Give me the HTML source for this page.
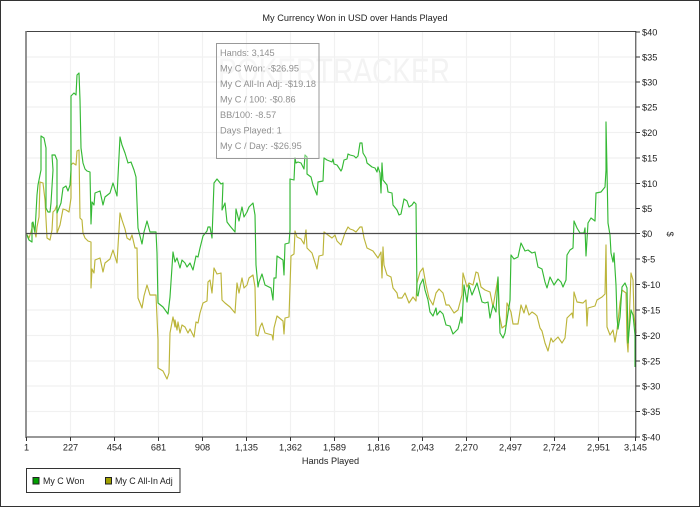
<!DOCTYPE html>
<html><head><meta charset="utf-8"><style>
html,body{margin:0;padding:0;width:700px;height:507px;overflow:hidden;background:#fff}
svg{display:block}
text{font-family:"Liberation Sans",Arial,sans-serif;font-size:9.2px;fill:#222}
.g line{stroke:#f1f1f1;stroke-width:1.2}
.l{fill:none;stroke-width:1.15;stroke-linejoin:round;vector-effect:non-scaling-stroke}
.gr{stroke:#35b935}.ol{stroke:#bcb53a}
.t text{fill:#909090}
</style></head><body>
<svg width="700" height="507" viewBox="0 0 700 507" xmlns="http://www.w3.org/2000/svg">
<rect x="0.5" y="0.5" width="699" height="506" fill="#fff" stroke="#333"/>
<text x="355" y="21" text-anchor="middle">My Currency Won in USD over Hands Played</text>
<g class="g">
<line x1="70.5" x2="70.5" y1="32" y2="437"/><line x1="114.5" x2="114.5" y1="32" y2="437"/><line x1="158.5" x2="158.5" y1="32" y2="437"/><line x1="202.5" x2="202.5" y1="32" y2="437"/><line x1="246.5" x2="246.5" y1="32" y2="437"/><line x1="290.5" x2="290.5" y1="32" y2="437"/><line x1="334.5" x2="334.5" y1="32" y2="437"/><line x1="378.5" x2="378.5" y1="32" y2="437"/><line x1="422.5" x2="422.5" y1="32" y2="437"/><line x1="466.5" x2="466.5" y1="32" y2="437"/><line x1="510.5" x2="510.5" y1="32" y2="437"/><line x1="554.5" x2="554.5" y1="32" y2="437"/><line x1="598.5" x2="598.5" y1="32" y2="437"/>
<line x1="26" x2="636" y1="57" y2="57"/><line x1="26" x2="636" y1="82" y2="82"/><line x1="26" x2="636" y1="107" y2="107"/><line x1="26" x2="636" y1="132.500" y2="132.500"/><line x1="26" x2="636" y1="158" y2="158"/><line x1="26" x2="636" y1="183.500" y2="183.500"/><line x1="26" x2="636" y1="208.500" y2="208.500"/><line x1="26" x2="636" y1="259" y2="259"/><line x1="26" x2="636" y1="284.500" y2="284.500"/><line x1="26" x2="636" y1="310" y2="310"/><line x1="26" x2="636" y1="335.500" y2="335.500"/><line x1="26" x2="636" y1="361" y2="361"/><line x1="26" x2="636" y1="386" y2="386"/><line x1="26" x2="636" y1="411.500" y2="411.500"/>
</g>
<text x="218" y="83" style="font-size:35px;fill:#f3f3f3" textLength="232" lengthAdjust="spacingAndGlyphs">POKERTRACKER</text>
<!-- olive -->
<polyline class="l ol" points="26,233 29,238 31,232 33,224 35,233 36,237 37,227 39,217 40,182 43,183 45,200 47,238 50,240 52,230 53,212 55,210 57,205 57,233 60,225 63,209 66,210 69,212 71,198 71,165 73,163 76,165 77,151 79,150 80,218 82,220 83,233 85,238 88,241 91,242 91,288 92,269 94,273 95,260 100,258 103,272 105,263 110,259 113,250 117,263 120,213 122,220 125,229 127,238 130,240 132,235 135,248 137,248 138,298 142,308 144,296 147,285 150,295 156,295 158,340 158,368 163,371 167,379 169,373 170,333 173,317 175,327 175,320 177,330 178,322 180,333 182,325 185,327 188,333 190,329 194,337 196,322 198,323 200,313 203,303 207,301 208,282 210,280 212,293 214,268 217,274 221,273 222,300 225,303 230,307 235,313 237,283 239,293 242,278 244,288 247,285 249,278 253,275 255,287 256,335 258,336 260,327 262,323 265,333 272,335 273,340 274,328 277,316 283,321 284,334 285,318 289,317 291,256 294,254 295,231 297,237 301,239 304,244 306,230 307,248 312,253 317,269 319,256 323,255 324,232 328,235 332,238 335,235 337,241 341,245 345,233 348,227 350,229 353,230 356,232 360,227 362,227 364,238 367,248 373,251 378,258 381,252 382,278 383,247 384,265 387,275 391,277 393,288 397,293 398,298 402,298 405,293 409,303 413,297 416,301 417,283 420,272 423,268 426,285 429,298 433,305 436,293 439,289 443,293 446,305 449,305 454,313 458,310 462,295 463,273 467,287 469,283 473,285 476,272 478,273 481,287 485,290 490,292 493,307 498,278 499,313 502,328 506,325 507,303 511,312 513,324 518,324 521,305 524,313 526,305 529,315 532,312 535,314 537,316 540,328 542,331 545,343 548,351 551,338 553,342 558,337 562,343 565,338 567,318 572,313 573,318 574,292 577,302 583,303 586,300 587,326 588,308 595,306 597,300 602,297 605,294 606,245 607,327 610,335 613,330 615,342 617,330 620,303 622,290 626,293 627,340 628,352 631,273 633,280 634,315 636,333"/>
<!-- green -->
<polyline class="l gr" points="26,233 29,240 32,242 32,223 33,222 35,232 37,195 38,185 41,170 41,136 44,138 46,148 46,208 48,212 50,212 51,203 53,170 52,155 55,155 57,160 57,213 61,203 63,188 66,186 68,191 70,185 71,170 71,96 74,93 76,95 77,75 79,73 80,100 81,148 83,163 85,169 87,171 90,172 91,224 92,202 94,205 95,193 100,191 103,205 105,197 110,193 113,183 117,196 120,137 122,145 125,153 128,163 131,162 134,170 136,177 138,228 142,244 144,232 147,221 150,232 156,232 157,253 158,303 163,307 168,314 170,297 173,252 175,262 177,258 180,268 182,260 185,263 187,267 190,263 193,270 196,256 198,257 200,248 203,236 207,231 208,227 210,227 212,238 214,183 217,179 221,184 223,183 222,210 225,203 227,222 230,226 235,232 236,209 239,221 242,207 244,217 247,212 249,207 253,203 255,215 256,265 258,287 259,282 262,274 265,285 271,288 273,300 274,278 276,278 277,256 283,260 284,275 285,244 289,243 290,230 290,179 294,180 295,158 296,163 298,162 301,163 304,169 305,155 307,157 307,174 311,177 313,185 317,195 318,182 323,181 324,158 327,160 332,162 333,159 334,164 337,165 341,171 342,169 344,160 347,159 348,154 350,155 354,156 356,158 358,156 360,143 362,143 363,153 366,158 367,163 372,167 375,168 377,172 378,167 380,173 381,193 382,163 383,180 387,185 388,192 392,193 393,205 397,210 399,215 401,214 404,199 407,201 409,207 412,205 414,202 416,204 417,295 418,296 420,285 423,279 425,290 428,300 430,312 433,316 436,308 437,315 440,311 443,314 446,325 450,326 453,334 458,329 461,317 462,323 464,285 467,302 469,285 472,295 477,283 482,302 485,303 488,302 490,318 493,305 496,312 498,277 500,333 503,338 505,333 510,300 511,255 514,259 518,257 521,243 525,251 528,250 532,253 535,252 538,267 542,269 545,282 547,288 550,277 554,285 558,279 561,282 563,287 566,280 567,255 570,250 573,248 574,221 577,228 580,233 584,233 585,228 586,256 588,223 591,218 595,221 596,193 601,192 605,187 606,170 606,122 607,170 608,223 610,235 611,253 613,262 614,253 616,285 617,317 618,329 620,317 622,287 625,283 627,288 628,343 631,310 633,315 635,335 635,367"/>
<!-- axes -->
<line x1="26" x2="636" y1="31.500" y2="31.500" stroke="#444" stroke-width="1"/>
<line x1="26" x2="26" y1="31" y2="438" stroke="#777" stroke-width="1.6"/>
<line x1="26" x2="636" y1="437" y2="437" stroke="#777" stroke-width="1.6"/>
<line x1="635.800" x2="635.800" y1="31" y2="438" stroke="#333" stroke-width="1"/>
<line x1="26" x2="636" y1="233.500" y2="233.500" stroke="#4a4a4a" stroke-width="1.2"/>
<g stroke="#333" stroke-width="1">
<line x1="636" x2="640" y1="32" y2="32"/><line x1="636" x2="640" y1="57" y2="57"/><line x1="636" x2="640" y1="82" y2="82"/><line x1="636" x2="640" y1="107" y2="107"/><line x1="636" x2="640" y1="132.500" y2="132.500"/><line x1="636" x2="640" y1="158" y2="158"/><line x1="636" x2="640" y1="183.500" y2="183.500"/><line x1="636" x2="640" y1="208.500" y2="208.500"/><line x1="636" x2="640" y1="233.500" y2="233.500"/><line x1="636" x2="640" y1="259" y2="259"/><line x1="636" x2="640" y1="284.500" y2="284.500"/><line x1="636" x2="640" y1="310" y2="310"/><line x1="636" x2="640" y1="335.500" y2="335.500"/><line x1="636" x2="640" y1="361" y2="361"/><line x1="636" x2="640" y1="386" y2="386"/><line x1="636" x2="640" y1="411.500" y2="411.500"/><line x1="636" x2="640" y1="437" y2="437"/>
<line x1="26.500" x2="26.500" y1="437" y2="441"/><line x1="70.500" x2="70.500" y1="437" y2="441"/><line x1="114.500" x2="114.500" y1="437" y2="441"/><line x1="158.500" x2="158.500" y1="437" y2="441"/><line x1="202.500" x2="202.500" y1="437" y2="441"/><line x1="246.500" x2="246.500" y1="437" y2="441"/><line x1="290.500" x2="290.500" y1="437" y2="441"/><line x1="334.500" x2="334.500" y1="437" y2="441"/><line x1="378.500" x2="378.500" y1="437" y2="441"/><line x1="422.500" x2="422.500" y1="437" y2="441"/><line x1="466.500" x2="466.500" y1="437" y2="441"/><line x1="510.500" x2="510.500" y1="437" y2="441"/><line x1="554.500" x2="554.500" y1="437" y2="441"/><line x1="598.500" x2="598.500" y1="437" y2="441"/><line x1="635.500" x2="635.500" y1="437" y2="441"/>
</g>
<g>
<text x="642" y="35.500">$40</text><text x="642" y="60.500">$35</text><text x="642" y="85.500">$30</text><text x="642" y="110.500">$25</text><text x="642" y="136">$20</text><text x="642" y="161.500">$15</text><text x="642" y="187">$10</text><text x="642" y="212">$5</text><text x="642" y="237">$0</text><text x="642" y="262.500">$-5</text><text x="642" y="288">$-10</text><text x="642" y="313.500">$-15</text><text x="642" y="339">$-20</text><text x="642" y="364.500">$-25</text><text x="642" y="389.500">$-30</text><text x="642" y="415">$-35</text><text x="642" y="440.500">$-40</text>
</g>
<text transform="translate(667,234) rotate(90)" text-anchor="middle">$</text>
<g text-anchor="middle">
<text x="26.500" y="450.500">1</text><text x="70.500" y="450.500">227</text><text x="114.500" y="450.500">454</text><text x="158.500" y="450.500">681</text><text x="202.500" y="450.500">908</text><text x="246.500" y="450.500">1,135</text><text x="290.500" y="450.500">1,362</text><text x="334.500" y="450.500">1,589</text><text x="378.500" y="450.500">1,816</text><text x="422.500" y="450.500">2,043</text><text x="466.500" y="450.500">2,270</text><text x="510.500" y="450.500">2,497</text><text x="554.500" y="450.500">2,724</text><text x="598.500" y="450.500">2,951</text><text x="635.500" y="450.500">3,145</text>
<text x="330.500" y="464">Hands Played</text>
</g>
<!-- tooltip -->
<rect x="216.500" y="43.500" width="102.500" height="115" fill="#fff" fill-opacity=".3" stroke="#999" stroke-width="1"/>
<g class="t">
<text x="220" y="56">Hands: 3,145</text>
<text x="220" y="71.500">My C Won: -$26.95</text>
<text x="220" y="87">My C All-In Adj: -$19.18</text>
<text x="220" y="102.500">My C / 100: -$0.86</text>
<text x="220" y="118">BB/100: -8.57</text>
<text x="220" y="133.500">Days Played: 1</text>
<text x="220" y="149">My C / Day: -$26.95</text>
</g>
<!-- legend -->
<rect x="26.500" y="468.500" width="153.500" height="24" fill="#fff" stroke="#333" stroke-width="1"/>
<rect x="33" y="477.500" width="6" height="6.500" fill="#00a000" stroke="#222" stroke-width="1"/>
<text x="43" y="484" style="font-size:8.9px">My C Won</text>
<rect x="105.500" y="477.500" width="6" height="6.500" fill="#a0a000" stroke="#222" stroke-width="1"/>
<text x="115" y="484" style="font-size:8.9px">My C All-In Adj</text>
</svg>
</body></html>
